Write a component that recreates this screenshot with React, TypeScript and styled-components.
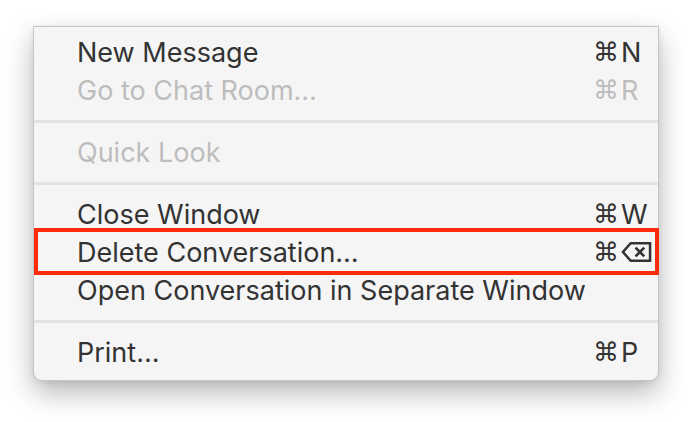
import React, { FC } from 'react';
import styled, { createGlobalStyle } from 'styled-components';

const GlobalStyle = createGlobalStyle`
    html, body {
        margin: 0;
        padding: 0;
        background: #ffffff;
    }
    body {
        font-family: Inter, "Noto Sans", "DejaVu Sans", sans-serif;
        -webkit-font-smoothing: antialiased;
    }
`;

const Page = styled.div`
    width: 692px;
    height: 422px;
    padding: 26px 0 0 33px;
    box-sizing: border-box;
`;

const Menu = styled.div`
    position: relative;
    width: 626px;
    box-sizing: border-box;
    padding: 6px 0 9px;
    background: #f5f5f5;
    border: 1px solid #c6c6c6;
    border-radius: 0 0 9px 9px;
    box-shadow: 0 12px 28px rgba(0, 0, 0, 0.28), 0 2px 6px rgba(0, 0, 0, 0.08);
`;

const Row = styled.div<{ disabled?: boolean }>`
    display: flex;
    align-items: center;
    height: 38px;
    padding: 0 6px 0 43px;
    font-size: 27px;
    color: ${({ disabled }) => (disabled ? '#bdbdbd' : '#333333')};
`;

const Label = styled.span`
    flex: 1;
    white-space: nowrap;
`;

const Shortcut = styled.span`
    width: 59px;
    display: flex;
    align-items: center;
    gap: 2px;
    white-space: nowrap;
`;

const Cmd = styled.span`
    font-family: "DejaVu Sans", sans-serif;
    font-size: 26px;
`;

const Separator = styled.div`
    height: 24px;
    display: flex;
    align-items: center;

    &::before {
        content: '';
        display: block;
        width: 100%;
        height: 3px;
        background: #e3e3e3;
    }
`;

const Highlight = styled.div`
    position: absolute;
    left: 0;
    right: -1px;
    top: 201px;
    height: 47px;
    border: 4px solid #ff2a0a;
    box-sizing: border-box;
    pointer-events: none;
`;

const DeleteKey: FC = () => (
    <svg width="32" height="22" viewBox="0 0 32 22" fill="none">
        <path
            d="M10 2 H30 V20 H10 L2 11 Z"
            stroke="#333333"
            strokeWidth="2.6"
            strokeLinejoin="miter"
        />
        <path d="M15 6.5 L24 15.5 M24 6.5 L15 15.5" stroke="#333333" strokeWidth="2.8" strokeLinecap="butt" />
    </svg>
);

type ItemProps = {
    label: string;
    shortcut?: React.ReactNode;
    disabled?: boolean;
};

const Item: FC<ItemProps> = ({ label, shortcut, disabled }) => (
    <Row disabled={disabled}>
        <Label>{label}</Label>
        <Shortcut>
            {shortcut && (
                <>
                    <Cmd>⌘</Cmd>
                    {shortcut}
                </>
            )}
        </Shortcut>
    </Row>
);

const App: FC = () => {
    return (
        <>
            <GlobalStyle />
            <Page>
                <Menu>
                    <Item label="New Message" shortcut="N" />
                    <Item label="Go to Chat Room…" shortcut="R" disabled />
                    <Separator />
                    <Item label="Quick Look" disabled />
                    <Separator />
                    <Item label="Close Window" shortcut="W" />
                    <Item label="Delete Conversation…" shortcut={<DeleteKey />} />
                    <Item label="Open Conversation in Separate Window" />
                    <Separator />
                    <Item label="Print…" shortcut="P" />
                    <Highlight />
                </Menu>
            </Page>
        </>
    );
};

export default App;
